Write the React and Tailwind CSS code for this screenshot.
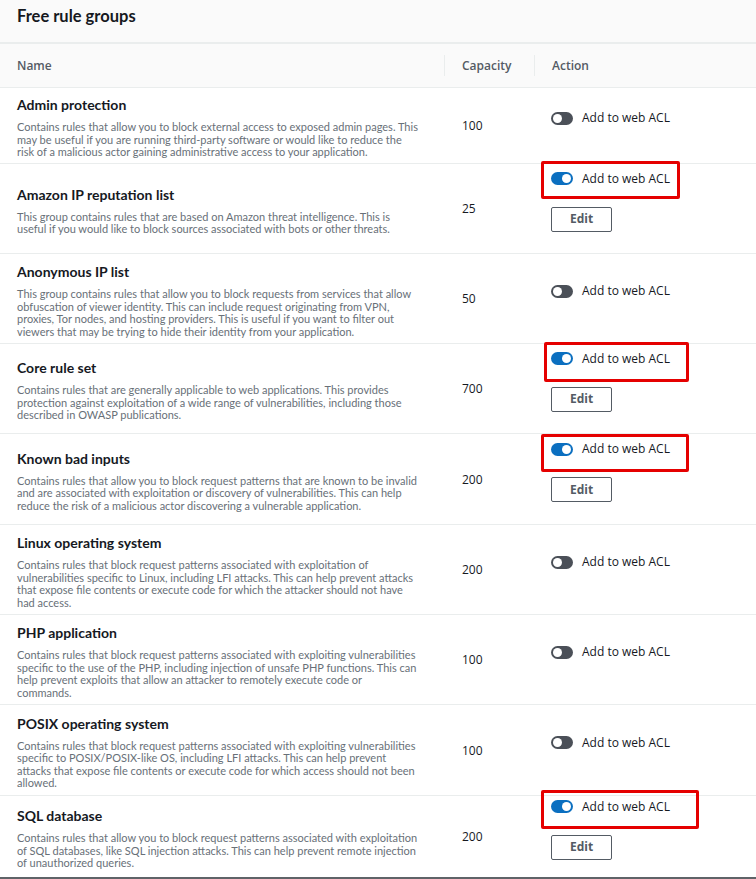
import React from 'react';

const RULES = [
    {
        name: 'Admin protection',
        capacity: 100,
        h: 'h-[76px]',
        on: false,
        desc: [
            'Contains rules that allow you to block external access to exposed admin pages. This',
            'may be useful if you are running third-party software or would like to reduce the',
            'risk of a malicious actor gaining administrative access to your application.',
        ],
    },
    {
        name: 'Amazon IP reputation list',
        capacity: 25,
        h: 'h-[90px]',
        on: true,
        box: 'top-[-10px] left-[-10px] w-[139px] h-[38px]',
        desc: [
            'This group contains rules that are based on Amazon threat intelligence. This is',
            'useful if you would like to block sources associated with bots or other threats.',
        ],
    },
    {
        name: 'Anonymous IP list',
        capacity: 50,
        h: 'h-[90px]',
        on: false,
        desc: [
            'This group contains rules that allow you to block requests from services that allow',
            'obfuscation of viewer identity. This can include request originating from VPN,',
            'proxies, Tor nodes, and hosting providers. This is useful if you want to filter out',
            'viewers that may be trying to hide their identity from your application.',
        ],
    },
    {
        name: 'Core rule set',
        capacity: 700,
        h: 'h-[90px]',
        on: true,
        box: 'top-[-9px] left-[-7px] w-[145px] h-[40px]',
        desc: [
            'Contains rules that are generally applicable to web applications. This provides',
            'protection against exploitation of a wide range of vulnerabilities, including those',
            'described in OWASP publications.',
        ],
    },
    {
        name: 'Known bad inputs',
        capacity: 200,
        h: 'h-[91px]',
        on: true,
        box: 'top-[-7px] left-[-10px] w-[148px] h-[38px]',
        desc: [
            'Contains rules that allow you to block request patterns that are known to be invalid',
            'and are associated with exploitation or discovery of vulnerabilities. This can help',
            'reduce the risk of a malicious actor discovering a vulnerable application.',
        ],
    },
    {
        name: 'Linux operating system',
        capacity: 200,
        h: 'h-[90px]',
        on: false,
        desc: [
            'Contains rules that block request patterns associated with exploitation of',
            'vulnerabilities specific to Linux, including LFI attacks. This can help prevent attacks',
            'that expose file contents or execute code for which the attacker should not have',
            'had access.',
        ],
    },
    {
        name: 'PHP application',
        capacity: 100,
        h: 'h-[90px]',
        on: false,
        desc: [
            'Contains rules that block request patterns associated with exploiting vulnerabilities',
            'specific to the use of the PHP, including injection of unsafe PHP functions. This can',
            'help prevent exploits that allow an attacker to remotely execute code or',
            'commands.',
        ],
    },
    {
        name: 'POSIX operating system',
        capacity: 100,
        h: 'h-[91px]',
        on: false,
        desc: [
            'Contains rules that block request patterns associated with exploiting vulnerabilities',
            'specific to POSIX/POSIX-like OS, including LFI attacks. This can help prevent',
            'attacks that expose file contents or execute code for which access should not been',
            'allowed.',
        ],
    },
    {
        name: 'SQL database',
        capacity: 200,
        h: 'h-[83px]',
        on: true,
        last: true,
        box: 'top-[-9px] left-[-10px] w-[158px] h-[39px]',
        desc: [
            'Contains rules that allow you to block request patterns associated with exploitation',
            'of SQL databases, like SQL injection attacks. This can help prevent remote injection',
            'of unauthorized queries.',
        ],
    },
];

function Toggle({ on }) {
    return (
        <span className={`relative inline-block w-[22px] h-[13px] rounded-full ${on ? 'bg-[#0b6fc0]' : 'bg-[#4b5058]'}`}>
            <span className={`absolute top-[2px] w-[9px] h-[9px] rounded-full bg-white ${on ? 'left-[11px]' : 'left-[2px]'}`} />
        </span>
    );
}

function RuleRow({ rule }) {
    return (
        <div className={`grid grid-cols-[444px_90px_1fr] ${rule.h} ${rule.last ? 'border-b-2 border-[#5f6368]' : 'border-b border-[#eaeded]'}`}>
            {/* Name + description */}
            <div className="flex flex-col justify-center pl-[17px] pt-[4px]">
                <h3 className="text-[14px] leading-[18px] font-bold text-[#16191f] mb-[7px]">{rule.name}</h3>
                <p className="text-[11px] leading-[12.5px] text-[#687078] whitespace-nowrap">
                    {rule.desc.map((line, i) => (
                        <React.Fragment key={i}>
                            {line}
                            {i < rule.desc.length - 1 && <br />}
                        </React.Fragment>
                    ))}
                </p>
            </div>

            {/* Capacity */}
            <div className="flex items-center pl-[18px] pt-[1px] font-['Open_Sans'] text-[12px] text-[#16191f]">
                {rule.capacity}
            </div>

            {/* Action */}
            <div className="flex flex-col justify-center pl-[17px] pb-[15px] font-['Open_Sans']">
                <div className="relative flex items-center gap-[9px] h-[16px]">
                    <Toggle on={rule.on} />
                    <span className="text-[12px] text-[#16191f]">Add to web ACL</span>
                    {rule.box && (
                        <span className={`absolute z-10 border-[3px] border-[#e50000] rounded-[2px] ${rule.box}`} />
                    )}
                </div>
                {rule.on && (
                    <button className="mt-[20px] w-[61px] h-[25px] border border-[#545b64] rounded-[2px] text-[12px] font-bold text-[#545b64] bg-white">
                        Edit
                    </button>
                )}
            </div>
        </div>
    );
}

export default function App() {
    return (
        <div className="w-[756px] h-[879px] overflow-hidden bg-white font-['Lato',sans-serif]">
            {/* Section title */}
            <div className="h-[44px] bg-[#fafafa] flex items-start pt-[5px] pl-[17px] border-b-2 border-[#eaeded]">
                <h2 className="text-[16.5px] leading-[22px] font-bold text-[#16191f]">Free rule groups</h2>
            </div>

            {/* Table header */}
            <div className="grid grid-cols-[444px_90px_1fr] h-[44px] bg-[#fafafa] border-b border-[#eaeded] font-['Open_Sans'] text-[12px] font-semibold text-[#545b64]">
                <div className="flex items-center pl-[17px]">Name</div>
                <div className="flex items-center">
                    <span className="w-px h-[21px] bg-[#eaeded]" />
                    <span className="pl-[17px]">Capacity</span>
                </div>
                <div className="flex items-center">
                    <span className="w-px h-[21px] bg-[#eaeded]" />
                    <span className="pl-[17px]">Action</span>
                </div>
            </div>

            {RULES.map(rule => (
                <RuleRow key={rule.name} rule={rule} />
            ))}
        </div>
    );
}
